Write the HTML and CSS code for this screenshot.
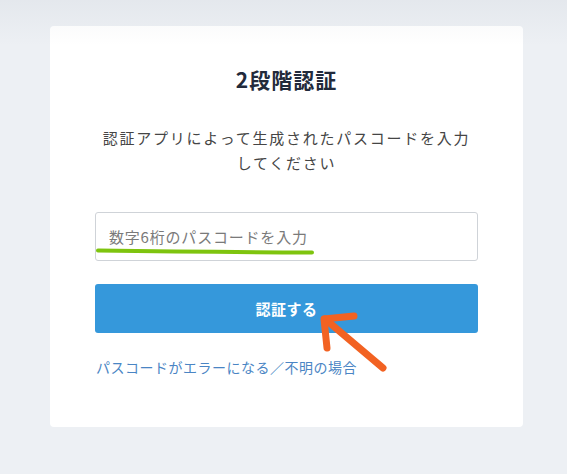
FILE: index.html
```html
<!DOCTYPE html>
<html lang="ja">
<head>
<meta charset="utf-8">
<title>2段階認証</title>
<link rel="stylesheet" href="styles.css">
</head>
<body>
<div class="top-shade"></div>
<main class="page">
  <section class="card">
    <h1 class="title">2段階認証</h1>
    <p class="desc">認証アプリによって生成されたパスコードを入力<br>してください</p>
    <div class="field">
      <input class="code-input" type="text" placeholder="数字6桁のパスコードを入力">
    </div>
    <button class="submit" type="button">認証する</button>
    <a class="help-link" href="#">パスコードがエラーになる／不明の場合</a>
  </section>
</main>
<svg class="annot" width="567" height="474" viewBox="0 0 567 474" aria-hidden="true">
  <path d="M98 250.5 Q200 252 312 252.5" fill="none" stroke="#7ec40e" stroke-width="4" stroke-linecap="round"/>
  <g fill="none" stroke="#f26222" stroke-width="7" stroke-linecap="round" stroke-linejoin="round">
    <path d="M383 368 L325 319"/>
    <path d="M354 316 L324 319 L327 348"/>
  </g>
</svg>
</body>
</html>
```

FILE: styles.css
```css
html, body {
  margin: 0;
  padding: 0;
}
body {
  position: relative;
  width: 567px;
  height: 474px;
  overflow: hidden;
  background: #edf0f4;
  font-family: "Noto Sans CJK JP", "Noto Sans", sans-serif;
}
.top-shade {
  position: absolute;
  left: 0;
  top: 0;
  width: 100%;
  height: 46px;
  background: linear-gradient(rgba(30, 50, 80, 0.045), rgba(30, 50, 80, 0));
  pointer-events: none;
  z-index: 2;
}
.page {
  display: flex;
  justify-content: flex-start;
  padding: 26px 0 0 50px;
}
.card {
  width: 473px;
  box-sizing: border-box;
  background: #fff;
  border-radius: 4px;
  padding: 36px 45px 50px;
  display: flex;
  flex-direction: column;
  align-items: stretch;
}
.title {
  margin: 0;
  text-align: center;
  font-size: 21px;
  line-height: 34px;
  font-weight: 700;
  color: #222a3b;
  letter-spacing: 1px;
}
.desc {
  margin: 29px 0 0;
  text-align: center;
  font-size: 15px;
  line-height: 25px;
  color: #454545;
  letter-spacing: 1.75px;
}
.field {
  margin-top: 37px;
}
.code-input {
  display: block;
  width: 100%;
  box-sizing: border-box;
  height: 49px;
  border: 1px solid #cfd3d8;
  border-radius: 3px;
  padding: 0 13px;
  font-family: inherit;
  font-size: 15px;
  letter-spacing: 0.8px;
  color: #333;
  background: #fff;
  outline: none;
}
.code-input::placeholder {
  color: #7a7a7a;
}
.submit {
  margin-top: 23px;
  height: 49px;
  border: none;
  border-radius: 3px;
  background: #3598db;
  color: #fff;
  font-family: inherit;
  font-size: 15px;
  font-weight: 700;
  letter-spacing: 0.5px;
  cursor: pointer;
}
.help-link {
  margin-top: 24px;
  font-size: 14px;
  line-height: 20px;
  color: #4a85c4;
  text-decoration: none;
  letter-spacing: 0.5px;
  align-self: flex-start;
  margin-left: 1px;
}
.annot {
  position: absolute;
  left: 0;
  top: 0;
  pointer-events: none;
  z-index: 3;
}
```
